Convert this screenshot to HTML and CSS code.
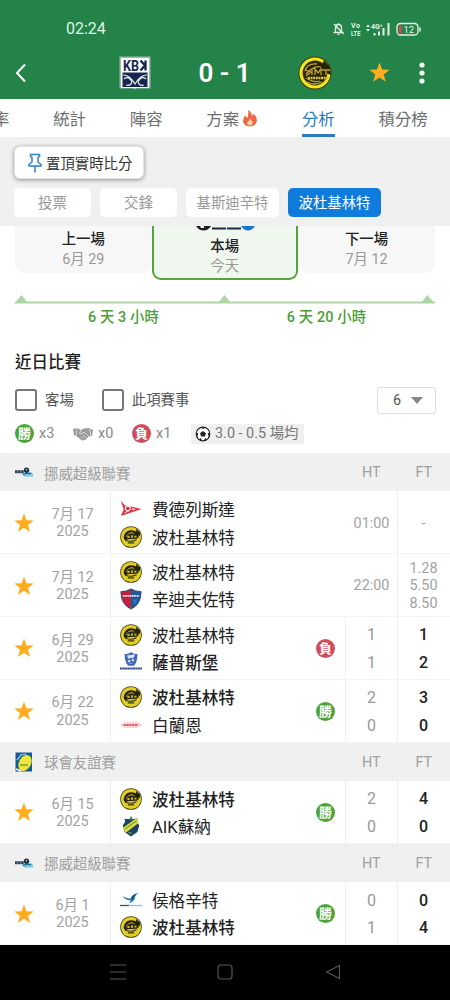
FILE: index.html
```html
<!DOCTYPE html>
<html lang="zh-Hant">
<head>
  <meta charset="UTF-8">
  <meta name="viewport" content="width=device-width, initial-scale=1.0">
  <title>分析</title>
  <link rel="stylesheet" href="styles.css">
</head>
<body>
  <!-- shared icons -->
  <svg class="sprite">
    <symbol id="star" viewBox="0 0 24 24">
      <path d="M12 1.5l2.7 7.4 7.9.3-6.2 4.9 2.2 7.6L12 17.3l-6.6 4.4 2.2-7.6L1.4 9.2l7.9-.3z" fill="#ffad1f"/>
    </symbol>
    <symbol id="bodo" viewBox="0 0 24 24">
      <circle cx="12" cy="12" r="11.8" fill="#4a4312"/>
      <circle cx="12" cy="12" r="11" fill="#e2cf25"/>
      <path d="M4 12q1-7 8-7.500 5 0 8 3.500l.5 4-2 2H17l-9 .5-2 1.500q-2-1-2-4z" fill="#25220f"/>
      <path d="M6.500 12q2-5 8-5M9 8.500q4-2 7 .5" fill="none" stroke="#b5a524" stroke-width=".8"/>
      <path d="M8 10.500h2.500V13H8zM12 10h2v3h-2zM15.500 10.500h2.500v2h-2.500z" fill="#c5b426"/>
      <path d="M6 15.500q6 2.500 12-.5M8.500 18.500h7" fill="none" stroke="#3a3410" stroke-width="1.300"/>
      <path d="M17.500 3.200l4.500 4-.5 4-4-3z" fill="#25220f"/>
    </symbol>
    <symbol id="fredrikstad" viewBox="0 0 24 24">
      <path d="M1 3l4 4.500 18.500 4.500L1 19.500l3-7z" fill="#dc3440"/>
      <path d="M5 16l5-2" stroke="#fff" stroke-width="1"/>
      <circle cx="8.500" cy="11" r="3.300" fill="#fff"/>
      <circle cx="8.500" cy="11.300" r="2" fill="#dc3440"/>
      <path d="M13 10.500l5 1.700-5 1.500z" fill="#f3b4b8"/>
    </symbol>
    <symbol id="sandefjord" viewBox="0 0 24 24">
      <path d="M1 4q6 0 11-3v22Q1 18 1 4z" fill="#c3203d"/>
      <path d="M12 1q5 3 11 3 0 14-11 19z" fill="#205a9c"/>
      <path d="M1 4q6 0 11-3 5 3 11 3 0 14-11 19Q1 18 1 4z" fill="none" stroke="#24406f" stroke-width="1"/>
      <path d="M3 8.500h18" stroke="#e8dce4" stroke-width="2" stroke-dasharray="2 .5"/>
      <path d="M14 13l5-1-3 6z" fill="#1b7fc0"/>
    </symbol>
    <symbol id="sarpsborg" viewBox="0 0 24 24">
      <path d="M5 3q4 1 7-2 3 3 7 2 0 10-4 13H9Q5 12 5 3z" fill="#3c65b4"/>
      <path d="M8 5l8-1-1 3-6 1zM9 10h2v2H9zM13 9h2v2h-2zM10 13.500h4" fill="#dfe8f7" stroke="#dfe8f7" stroke-width=".5"/>
      <path d="M0 19h24" stroke="#315394" stroke-width="2.200" stroke-dasharray="2.500 .3"/>
    </symbol>
    <symbol id="brann" viewBox="0 0 24 24">
      <path d="M0 12l5-3h14l5 3-5 3H5z" fill="#fdeaea"/>
      <path d="M1 12l4-2.300h14l4 2.300-4 2.300H5z" fill="none" stroke="#f0a0a0" stroke-width=".6"/>
      <path d="M4 12h16" stroke="#e04c50" stroke-width="2.200" stroke-dasharray="2.300 .8"/>
    </symbol>
    <symbol id="aik" viewBox="0 0 24 24">
      <path d="M12 1.500l2 3 5-1-.5 4 2.500 4-2 7-7 5-7-5-2-7 2.500-4L5 4l5 .5z" fill="#1b4265"/>
      <path d="M3 14L18 3.500l2.500 5L6 19.500z" fill="#d6dc3c"/>
      <path d="M5 15.500L18 6.500" stroke="#57772d" stroke-width="1"/>
      <path d="M12 1.500v4M9 18.500l4 2" stroke="#72a252" stroke-width="1.300"/>
    </symbol>
    <symbol id="haugesund" viewBox="0 0 24 24">
      <path d="M3 8q5 3 9 2 2-5 9-6-5 2-5 7-2 4-6 4l2-3Q6 13 3 8z" fill="#1c79b8"/>
      <path d="M12 10q1-4 7-5-4 2-5 7z" fill="#164c80"/>
      <path d="M0 18h10" stroke="#305475" stroke-width="1.400"/>
      <path d="M10.500 18H24" stroke="#8fc1dd" stroke-width="1.400"/>
    </symbol>
    <symbol id="eliteserien" viewBox="0 0 20 12">
      <path d="M8 7.500q5-2 10-1l1.500 4H10z" fill="#6cc6e6"/>
      <path d="M1 5.800h9" stroke="#2f465a" stroke-width="3" stroke-dasharray="2.600 .3"/>
      <circle cx="12.500" cy="4.200" r="2.700" fill="#1f3447"/>
      <circle cx="12.500" cy="3.800" r=".8" fill="#b8dae6"/>
      <path d="M9 8.500q4-2 8-1" stroke="#1d5675" fill="none"/>
    </symbol>
    <symbol id="friendly" viewBox="0 0 18 20">
      <rect x=".5" y=".5" width="16.500" height="19" fill="#135c92"/>
      <ellipse cx="10" cy="11" rx="6" ry="8.500" transform="rotate(28 10 11)" fill="#f0e63a"/>
      <path d="M2 8l4-5 5-1" stroke="#7dbadd" fill="none" stroke-width="1.500"/>
      <path d="M5 13h8" stroke="#9caf3a" stroke-width="2"/>
      <path d="M1 17l5 2" stroke="#fff" stroke-width="1.500"/>
    </symbol>
    <symbol id="ball" viewBox="0 0 16 16">
      <circle cx="8" cy="8" r="6.800" fill="#fff" stroke="#222" stroke-width="1.200"/>
      <path d="M8 5l3 2.200-1.100 3.400H6.100L5 7.200zM5.300 1.600L8 3l2.700-1.400zM1.300 6l2 1.600L2 11zM14.700 6l-2 1.600L14 11zM4.500 13.800l.8-2 2 2.600zM11.500 13.800l-.8-2-2 2.600z" fill="#222"/>
    </symbol>
  </svg>

  <header>
    <div class="status">
      <span class="clock">02:24</span>
      <svg class="status-icons" viewBox="0 0 92 16">
        <path d="M1.500 11.500h10M3.500 11V7q0-3.500 3-3.500t3 3.500v4M6.500 2v1M5.500 13.300h2M2 3l9.500 10" fill="none" stroke="#e4f5e8" stroke-width="1.300"/>
        <text x="19" y="7.200" class="tiny" textLength="9">Vo</text>
        <text x="19" y="14.500" class="tiny" textLength="9.500" lengthAdjust="spacingAndGlyphs">LTE</text>
        <path d="M34 6l2-2.500L38 6zM34 8l2 2.500L38 8z" fill="#e4f5e8"/>
        <text x="39" y="8" class="tiny">4G⁺</text>
        <path d="M42.500 12v2.500M47 10.500v4M51.500 7v7.500M56.500 2v12.500" stroke="#e4f5e8" stroke-width="2"/>
        <rect x="65" y="2.500" width="21" height="11.500" rx="3.500" fill="none" stroke="#e4f5e8" stroke-width="1.300"/>
        <path d="M67 4.500h2.500v7.500H67z" fill="#e8414f"/>
        <path d="M88 6.500v4" stroke="#e4f5e8" stroke-width="1.500"/>
        <text x="71.500" y="11.600" class="level">12</text>
      </svg>
    </div>
    <div class="scorebar">
      <svg class="back" viewBox="0 0 12 20"><path d="M10 1.500L2 10l8 8.500" fill="none" stroke="#fff" stroke-width="2"/></svg>
      <svg class="home-logo" viewBox="0 0 32 34">
        <path d="M.5.5h31v32H18l-2 1-2-1H.5z" fill="#9fb9b5"/>
        <rect x="2" y="2" width="28" height="30" fill="#fff"/>
        <path d="M3.500 16.500h25V31h-25z" fill="#18264d"/>
        <text x="4" y="14.500" class="kb" textLength="16" lengthAdjust="spacingAndGlyphs">KB</text>
        <path d="M26.500 4.500v10M21.500 4.500l4.500 5-4.500 5" fill="none" stroke="#18264d" stroke-width="2.300"/>
        <path d="M4 19q7 0 12 9 5-9 12-9M5 23q3-3 6 0t1 5-5 1M27 23q-3-3-6 0t-1 5 5 1" fill="none" stroke="#dbe4ec" stroke-width="1.200"/>
      </svg>
      <span class="score">0 - 1</span>
      <svg class="away-logo" viewBox="0 0 34 34">
        <circle cx="17" cy="17" r="16.500" fill="#39390e"/>
        <circle cx="17" cy="17" r="14" fill="none" stroke="#f3e321" stroke-width="3.200"/>
        <circle cx="17" cy="17" r="11.500" fill="#29230d"/>
        <path d="M26 4l6 7 1 8-5-2-4-8z" fill="#29230d"/>
        <path d="M7 15q2-8 12-7M9 26q7 4 15 0M7 14l6 2-5 4M14 13v6M17 19v-6l3 4 3-4v6M24 14h8M28 14v5M8 18q8-9 15-7M8 22q8 5 14 3" fill="none" stroke="#bea43c" stroke-width="1.300"/>
        <path d="M10 22h21" stroke="#d9c13c" stroke-width="2.500" stroke-dasharray="2 .6"/>
      </svg>
      <svg class="fav"><use href="#star"/></svg>
      <svg class="more" viewBox="0 0 6 22"><circle cx="3" cy="3" r="2.600"/><circle cx="3" cy="11" r="2.600"/><circle cx="3" cy="19" r="2.600"/></svg>
    </div>
  </header>

  <nav class="tabs">
    <a>率</a>
    <a>統計</a>
    <a>陣容</a>
    <a class="hot">方案
      <svg viewBox="0 0 16 18"><path d="M6 1q4 2 4 6 1.500-1 1.500-2.500Q15 8 15 11.500 14.500 17 8 17.500 1.500 17 1 12q0-3 2.500-6 0 2 1.500 3Q7 6 6 1z" fill="#ee6746"/><path d="M8.200 9q.5 2.500 2.300 3.500.5 3-2.500 4-3-.6-3-3 2.500-1.500 3.200-4.500z" fill="#fbd3ae"/></svg>
    </a>
    <a class="active">分析</a>
    <a>積分榜</a>
  </nav>

  <div class="filters">
    <button class="pin">
      <svg viewBox="0 0 14 20"><path d="M2.500 1.500h9v2l-1.500 1V9l3 2.500V13H1v-1.500L4 9V4.500l-1.500-1zM7 13v6.500" fill="none" stroke="#2f7fc9" stroke-width="1.500"/></svg>
      置頂實時比分
    </button>
    <div class="chips">
      <span class="chip">投票</span>
      <span class="chip">交鋒</span>
      <span class="chip wide">基斯迪辛特</span>
      <span class="chip wide selected">波杜基林特</span>
    </div>
  </div>

  <main>
    <div class="schedule">
      <div class="game"><b>上一場</b><span>6月 29</span></div>
      <div class="game current">
        <svg class="logos" viewBox="0 0 62 5"><path d="M1 0h15q-3 4.500-7.500 4.500T1 0z" fill="#202020"/><path d="M5 0h4v2H6z" fill="#fff"/><path d="M17 1.500h14v2H17zM32 1.500h14v2H32z" fill="#20294c"/><path d="M46 0h14q-3 4.500-7 4.500T46 0z" fill="#1976d2"/></svg>
        <b>本場</b><span>今天</span>
      </div>
      <div class="game"><b>下一場</b><span>7月 12</span></div>
    </div>

    <div class="timeline">
      <svg viewBox="0 0 420 9"><path d="M0 7.500h420" stroke="#aed6a4" stroke-width="2"/><path d="M0 8l6.500-8L13 8zM203 8l6.500-8 6.500 8zM406 8l6.500-8 6.500 8z" fill="#aed6a4"/></svg>
      <div class="gaps"><span>6 天 3 小時</span><span>6 天 20 小時</span></div>
    </div>

    <h2>近日比賽</h2>

    <div class="options">
      <i class="box"></i><label>客場</label>
      <i class="box"></i><label>此項賽事</label>
      <div class="select">6 <i class="caret"></i></div>
    </div>

    <div class="summary">
      <span class="badge win">勝</span><span class="times">x3</span>
      <svg class="shake" viewBox="0 0 20 14"><path d="M0 2l4-1 4 2 3-1.500 5-.5L20 3l-1 6-3 .5-4 3.500-3 .5-5-4L1 8z" fill="#999"/><path d="M8 3L6.500 6.500Q9 7.500 11 5l5 4.500M10 8l3 3M8 9.500l2.500 2.500M4 1.500L3 9M16.500 1.500L18 9" fill="none" stroke="#eee" stroke-width=".8"/></svg><span class="times draws">x0</span>
      <span class="badge loss">負</span><span class="times">x1</span>
      <span class="average"><svg><use href="#ball"/></svg>3.0 - 0.5 場均</span>
    </div>

    <div class="league"><svg><use href="#eliteserien"/></svg><span>挪威超級聯賽</span><em>HT</em><em>FT</em></div>
    <div class="match">
      <svg class="star"><use href="#star"/></svg>
      <div class="date">7月 17<br>2025</div>
      <div class="teams">
        <div><svg><use href="#fredrikstad"/></svg>費德列斯達</div>
        <div><svg><use href="#bodo"/></svg>波杜基林特</div>
      </div>
      <div class="result"></div>
      <div class="ht open time">01:00</div>
      <div class="ft odds">-</div>
    </div>
    <div class="match">
      <svg class="star"><use href="#star"/></svg>
      <div class="date">7月 12<br>2025</div>
      <div class="teams">
        <div><svg><use href="#bodo"/></svg>波杜基林特</div>
        <div><svg><use href="#sandefjord"/></svg>辛迪夫佐特</div>
      </div>
      <div class="result"></div>
      <div class="ht open time">22:00</div>
      <div class="ft odds">1.28<br>5.50<br>8.50</div>
    </div>
    <div class="match">
      <svg class="star"><use href="#star"/></svg>
      <div class="date">6月 29<br>2025</div>
      <div class="teams">
        <div><svg><use href="#bodo"/></svg>波杜基林特</div>
        <div class="winner"><svg><use href="#sarpsborg"/></svg>薩普斯堡</div>
      </div>
      <div class="result"><span class="badge loss">負</span></div>
      <div class="ht">1<br>1</div>
      <div class="ft">1<br>2</div>
    </div>
    <div class="match">
      <svg class="star"><use href="#star"/></svg>
      <div class="date">6月 22<br>2025</div>
      <div class="teams">
        <div class="winner"><svg><use href="#bodo"/></svg>波杜基林特</div>
        <div><svg><use href="#brann"/></svg>白蘭恩</div>
      </div>
      <div class="result"><span class="badge win">勝</span></div>
      <div class="ht">2<br>0</div>
      <div class="ft">3<br>0</div>
    </div>

    <div class="league"><svg><use href="#friendly"/></svg><span>球會友誼賽</span><em>HT</em><em>FT</em></div>
    <div class="match">
      <svg class="star"><use href="#star"/></svg>
      <div class="date">6月 15<br>2025</div>
      <div class="teams">
        <div class="winner"><svg><use href="#bodo"/></svg>波杜基林特</div>
        <div><svg><use href="#aik"/></svg>AIK蘇納</div>
      </div>
      <div class="result"><span class="badge win">勝</span></div>
      <div class="ht">2<br>0</div>
      <div class="ft">4<br>0</div>
    </div>

    <div class="league"><svg><use href="#eliteserien"/></svg><span>挪威超級聯賽</span><em>HT</em><em>FT</em></div>
    <div class="match">
      <svg class="star"><use href="#star"/></svg>
      <div class="date">6月 1<br>2025</div>
      <div class="teams">
        <div><svg><use href="#haugesund"/></svg>侯格辛特</div>
        <div class="winner"><svg><use href="#bodo"/></svg>波杜基林特</div>
      </div>
      <div class="result"><span class="badge win">勝</span></div>
      <div class="ht">0<br>1</div>
      <div class="ft">0<br>4</div>
    </div>
  </main>

  <footer>
    <svg viewBox="0 0 16 16"><path d="M0 1h16M0 8h16M0 15h16"/></svg>
    <svg viewBox="0 0 16 16"><rect x="1" y="1" width="14" height="14" rx="3"/></svg>
    <svg viewBox="0 0 16 16"><path d="M14.500 1.500v13L1.500 8z" stroke-linejoin="round"/></svg>
  </footer>
</body>
</html>
```

FILE: styles.css
```css
* {
  box-sizing: border-box;
}
body {
  margin: 0;
  width: 450px;
  height: 1000px;
  overflow: hidden;
  font-family: Roboto, "Noto Sans CJK TC", sans-serif;
  font-size: 14.4px;
  background: #fff;
  color: #222;
}
svg {
  display: block;
  flex: none;
}
.sprite {
  display: none;
}

/* header */
header {
  height: 99px;
  background: #238348;
  color: #fff;
}
.status {
  display: flex;
  align-items: center;
  justify-content: space-between;
  height: 46px;
  padding: 12px 24px 0 66px;
}
.clock {
  font-size: 16px;
  line-height: 20px;
  color: #ddf7e3;
}
.status-icons {
  width: 92px;
  height: 16px;
  margin-right: 2px;
}
.tiny {
  font: bold 7px Roboto;
  fill: #e4f5e8;
}
.level {
  font: 9.5px Roboto;
  fill: #e4f5e8;
}
.scorebar {
  display: flex;
  align-items: center;
  height: 53px;
  padding-left: 15px;
}
.back {
  width: 12px;
  height: 20px;
}
.home-logo {
  width: 32px;
  height: 34px;
  margin-left: 92px;
}
.kb {
  font: bold 14px Roboto;
  fill: #18264d;
}
.score {
  width: 147px;
  padding-top: 1px;
  text-align: center;
  font-size: 26px;
  font-weight: 600;
  line-height: 32px;
}
.away-logo {
  width: 34px;
  height: 34px;
}
.fav {
  width: 23px;
  height: 23px;
  margin-left: 36px;
}
.more {
  width: 6px;
  height: 22px;
  margin-left: 28px;
  fill: #f3fff6;
}

/* tabs */
.tabs {
  display: flex;
  gap: 43.8px;
  height: 38px;
  padding-top: 3px;
  margin-left: -7px;
  white-space: nowrap;
}
.tabs a {
  flex: none;
  height: 35px;
  line-height: 35px;
  font-size: 16.4px;
  color: #6e6e6e;
}
.tabs .hot {
  display: flex;
  gap: 3px;
}
.hot svg {
  width: 16px;
  height: 18px;
  margin-top: 7px;
}
.tabs .active {
  color: #2b7cc4;
  border-bottom: 3px solid #2b7cc4;
}

.filters {
  height: 89px;
  padding: 9px 14px;
  background: #f0f0f0;
}
.pin {
  display: flex;
  align-items: center;
  gap: 4px;
  width: 130px;
  height: 33px;
  padding: 0 0 0 13px;
  border: 1px solid #e2e2e2;
  border-radius: 6px;
  background: #fff;
  box-shadow: 0 1px 4px rgba(0,0,0,0.4);
  font: 14.4px Roboto, "Noto Sans CJK TC", sans-serif;
  color: #333;
  white-space: nowrap;
}
.pin svg {
  width: 14px;
  height: 20px;
}
.chips {
  display: flex;
  gap: 9px;
  margin-top: 9px;
}
.chip {
  width: 77px;
  height: 29px;
  line-height: 31px;
  border-radius: 5px;
  background: #fff;
  color: #999;
  text-align: center;
}
.chip.wide {
  width: 93px;
}
.chip.selected {
  background: #0f7bdb;
  color: #fff;
}

/* previous / current / next game */
.schedule {
  display: grid;
  grid-template-columns: 136.5px 146.5px 137px;
  align-items: start;
  height: 54px;
  margin-left: 15px;
}
.game {
  height: 47px;
  padding-top: 4px;
  border-radius: 0 0 9px 9px;
  background: #f7f7f7;
  text-align: center;
  line-height: 19.5px;
}
.game b, .game span {
  display: block;
}
.game b {
  font-weight: 500;
}
.game span {
  color: #999;
}
.game.current {
  position: relative;
  height: 54px;
  padding-top: 11px;
  border: 2px solid #55a23f;
  border-top: 0;
  background: #eff7ef;
}
.logos {
  position: absolute;
  top: 0;
  left: 41px;
  width: 62px;
  height: 5px;
}
.timeline {
  margin: 15px 15px 0;
  color: #4d9d36;
  font-weight: 500;
}
.timeline svg {
  width: 420px;
  height: 9px;
}
.gaps {
  display: flex;
  padding: 2px 7px 0;
}
.gaps span {
  flex: 1;
  text-align: center;
  line-height: 24px;
  letter-spacing: 0.1px;
}
h2 {
  margin: 21px 15px 0;
  font-size: 16.5px;
  font-weight: 500;
  line-height: 24px;
}
.options {
  display: flex;
  align-items: center;
  height: 28px;
  margin: 11px 14px 0 15px;
  color: #555;
}
.box {
  width: 22px;
  height: 22px;
  margin-right: 8px;
  border: 2px solid #777;
  border-radius: 3px;
}
.options label {
  margin-right: 28px;
  padding-top: 2px;
  line-height: 20px;
}
.select {
  display: flex;
  align-items: center;
  gap: 10px;
  width: 59px;
  height: 27px;
  margin-left: auto;
  padding-left: 15px;
  border: 1px solid #ddd;
  border-radius: 3px;
}
.caret {
  border: 6px solid transparent;
  border-top: 7px solid #888;
  border-bottom: 0;
}
.summary {
  display: flex;
  align-items: center;
  height: 39px;
  padding-left: 15px;
  color: #888;
}
.badge {
  width: 19px;
  height: 19px;
  border-radius: 50%;
  color: #fff;
  font-size: 13px;
  font-weight: 700;
  line-height: 19px;
  text-align: center;
}
.win {
  background: #4da339;
}
.loss {
  background: #cf4c5d;
}
.times {
  width: 34px;
  padding-left: 5px;
}
.draws {
  width: 39px;
}
.shake {
  width: 20px;
  height: 14px;
  margin-left: 5px;
}
.average {
  display: flex;
  align-items: center;
  gap: 4px;
  height: 20px;
  margin-left: 6px;
  padding: 0 6px 0 4px;
  background: #f0f0f0;
  color: #777;
  line-height: 20px;
  white-space: nowrap;
}
.average svg {
  width: 16px;
  height: 16px;
}

/* match list */
.league {
  display: flex;
  align-items: center;
  height: 38.4px;
  padding-left: 14px;
  background: #f0f0f0;
  color: #a0a0a0;
}
.league svg {
  width: 20px;
  height: 20px;
}
.league span {
  flex: 1;
  padding-left: 10px;
}
.league em {
  width: 52.5px;
  padding-top: 1px;
  font-style: normal;
  text-align: center;
}
.match {
  display: flex;
  align-items: center;
  height: 62.8px;
  background: #fff;
  border-bottom: 1px solid #f4f4f4;
}
.star {
  width: 22px;
  height: 22px;
  margin: 1px 0 0 13px;
}
.date {
  width: 75px;
  padding-top: 2px;
  text-align: center;
  line-height: 17.3px;
  color: #a2a2a2;
}
.teams {
  display: flex;
  flex-direction: column;
  justify-content: center;
  width: 196px;
  height: 100%;
  padding: 1px 0 0 9px;
  border-left: 1px solid #eee;
}
.teams div {
  display: flex;
  align-items: center;
  gap: 10px;
  height: 27.5px;
  font-size: 16.6px;
}
.teams svg {
  width: 22px;
  height: 22px;
}
.winner {
  font-weight: 500;
}
.result {
  width: 39px;
  padding: 1px 0 0 10px;
}
.result .badge {
  display: block;
}
.ht, .ft {
  display: flex;
  flex-direction: column;
  align-items: center;
  justify-content: center;
  width: 52px;
  height: 100%;
  padding-top: 2px;
  border-left: 1px solid #eee;
  font-size: 16px;
  line-height: 27.5px;
  text-align: center;
}
.ht {
  color: #999;
}
.ft {
  width: 53px;
  padding-right: 1px;
  font-weight: 500;
}
.ht.open {
  border-left-color: transparent;
}
.ht.time, .ft.odds {
  font-size: 14.4px;
  font-weight: 400;
  line-height: 17.3px;
  color: #a2a2a2;
}

footer {
  display: flex;
  align-items: center;
  justify-content: center;
  gap: 91.5px;
  height: 55px;
  background: #000;
}
footer svg {
  width: 16px;
  height: 16px;
  fill: none;
  stroke: #555;
  stroke-width: 1.2;
}
```
